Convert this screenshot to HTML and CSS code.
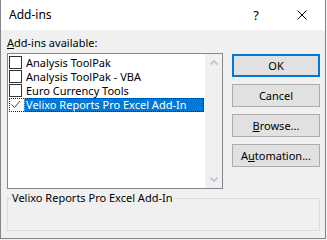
FILE: index.html
```html
<!DOCTYPE html>
<html>
<head>
<meta charset="utf-8">
<title>Add-ins</title>
<link rel="stylesheet" href="styles.css">
</head>
<body>
<div class="window">
  <div class="titlebar">
    <span class="title">Add-ins</span>
    <span class="tb-btn">?</span>
    <span class="tb-btn"><svg width="10" height="10" viewBox="0 0 10 10"><path d="M0.5 0.5L9.5 9.5M9.5 0.5L0.5 9.5" stroke="#000" stroke-width="1" fill="none"/></svg></span>
  </div>
  <div class="content">
    <div class="label"><u>A</u>dd-ins available:</div>
    <div class="main">
      <div class="listbox">
        <div class="items">
          <div class="item"><span class="cb"></span><span class="txt">Analysis ToolPak</span></div>
          <div class="item"><span class="cb"></span><span class="txt">Analysis ToolPak - VBA</span></div>
          <div class="item"><span class="cb"></span><span class="txt">Euro Currency Tools</span></div>
          <div class="item sel"><span class="cb checked"><svg width="11" height="11" viewBox="0 0 11 11"><path d="M1.5 5.5L4.5 8.5L10 2" stroke="#444" stroke-width="1" fill="none"/></svg></span><span class="txt">Velixo Reports Pro Excel Add-In</span></div>
        </div>
        <div class="scrollbar">
          <div class="sb-btn"><svg width="8" height="5" viewBox="0 0 8 5"><path d="M0.5 4.5L4 1L7.5 4.5" stroke="#c2c2c2" stroke-width="1.6" fill="none"/></svg></div>
          <div class="sb-track"></div>
          <div class="sb-btn"><svg width="8" height="5" viewBox="0 0 8 5"><path d="M0.5 0.5L4 4L7.5 0.5" stroke="#c2c2c2" stroke-width="1.6" fill="none"/></svg></div>
        </div>
      </div>
      <div class="buttons">
        <button class="btn default">OK</button>
        <button class="btn">Cancel</button>
        <button class="btn"><u>B</u>rowse...</button>
        <button class="btn">A<u>u</u>tomation...</button>
      </div>
    </div>
    <fieldset class="group"><legend>Velixo Reports Pro Excel Add-In</legend></fieldset>
  </div>
</div>
</body>
</html>
```
FILE: styles.css
```css
* { box-sizing: border-box; }
html, body { margin: 0; padding: 0; }
body {
  background: #f0f0f0;
  font-family: "Noto Sans", "Liberation Sans", sans-serif;
  font-size: 11px;
  color: #000;
  width: 327px;
  height: 240px;
  overflow: hidden;
}
.window {
  width: 326px;
  height: 239px;
  border: 1px solid #858585;
  border-top: none;
  background: #f0f0f0;
  display: flex;
  flex-direction: column;
}
.titlebar {
  height: 30px;
  background: #fff;
  display: flex;
  align-items: center;
  flex: none;
  font-size: 12px;
}
.title {
  flex: 1;
  padding-left: 8px;
  line-height: 16px;
}
.tb-btn {
  width: 46px;
  height: 30px;
  display: flex;
  align-items: center;
  justify-content: center;
  font-size: 13px;
}
.content {
  padding: 5px 5px 0 6px;
}
.label {
  line-height: 16px;
  margin-bottom: 2px;
}
.main {
  display: flex;
  gap: 9px;
}
.listbox {
  width: 216px;
  height: 136px;
  border: 1px solid #828790;
  display: flex;
  background: #fff;
}
.items {
  flex: 1;
  padding: 2px 1px 0 1px;
}
.item {
  height: 14px;
  display: flex;
  align-items: flex-start;
  line-height: 14px;
  white-space: nowrap;
}
.cb {
  width: 13px;
  height: 13px;
  border: 1px solid #333;
  background: #fff;
  flex: none;
  display: flex;
  align-items: center;
  justify-content: center;
}
.txt {
  margin-left: 2px;
  padding-left: 2px;
  height: 14px;
}
.sel {
  outline: 1px dotted #222;
  outline-offset: -1px;
}
.sel .cb { border-color: transparent; }
.sel .txt {
  flex: 1;
  background: #0078d7;
  color: #fff;
  outline: 1px dotted #ff9a3c;
  outline-offset: -1px;
}
.scrollbar {
  width: 17px;
  flex: none;
  background: #f0f0f0;
  display: flex;
  flex-direction: column;
}
.sb-btn {
  height: 17px;
  display: flex;
  align-items: center;
  justify-content: center;
}
.sb-track { flex: 1; }
.buttons {
  display: flex;
  flex-direction: column;
  gap: 7px;
  margin-top: 1px;
}
.btn {
  width: 88px;
  height: 23px;
  background: #e1e1e1;
  border: 1px solid #adadad;
  font: inherit;
  color: #000;
  padding: 0;
  margin: 0;
}
.btn.default { border: 2px solid #0078d7; }
.group {
  margin: 1px 0 0 0;
  width: 313px;
  height: 41px;
  padding: 0 3px;
  border: 1px solid #dcdcdc;
  min-width: 0;
}
.group legend {
  padding: 0 1px;
  line-height: 16px;
}
```
